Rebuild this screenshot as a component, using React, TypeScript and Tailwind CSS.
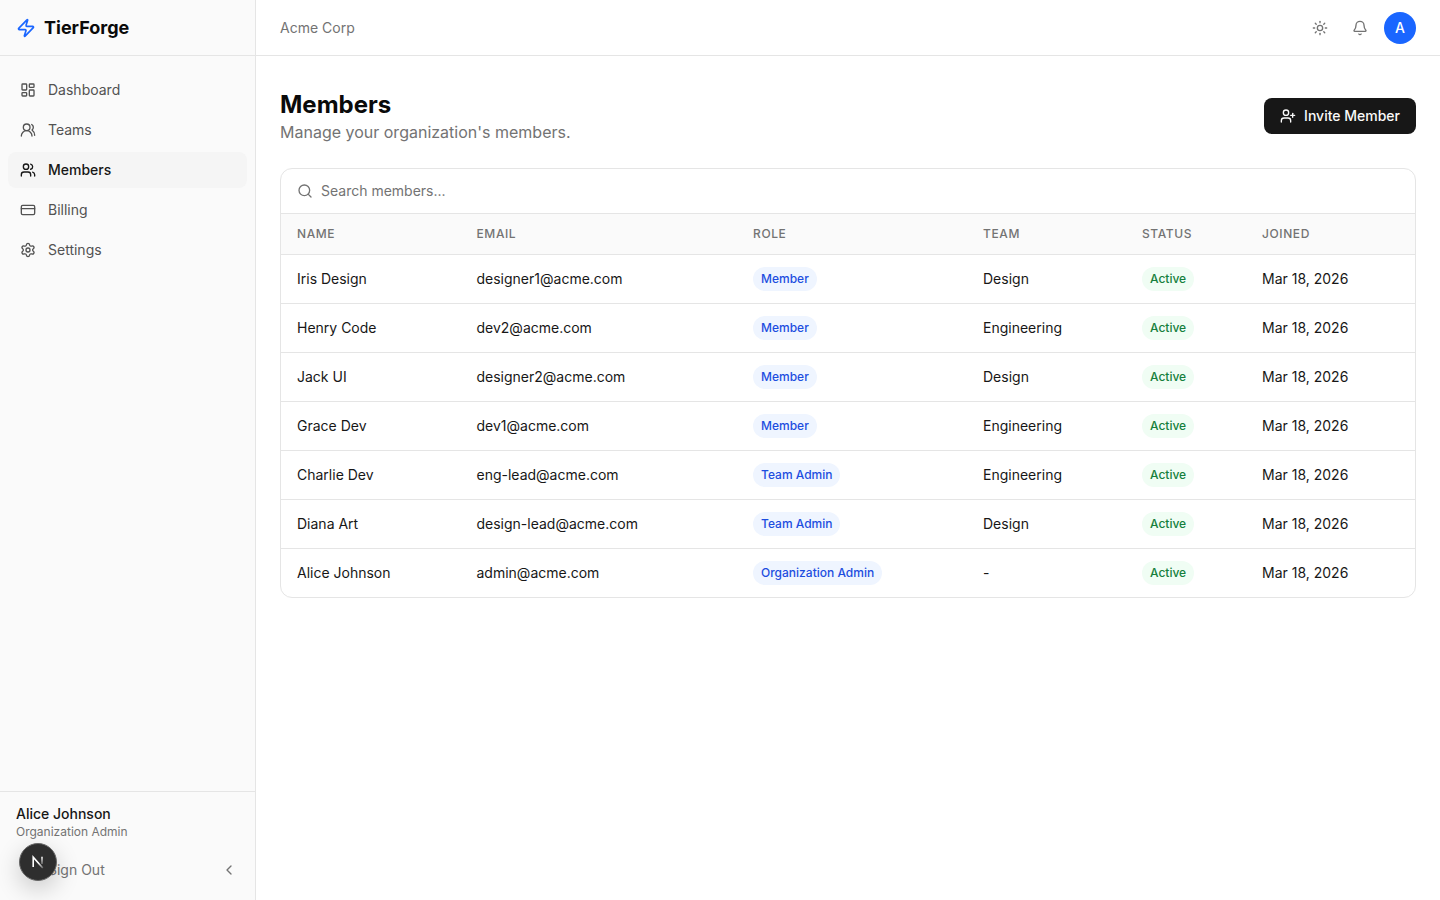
import {
  Bell,
  ChevronLeft,
  CreditCard,
  LayoutDashboard,
  Search,
  Settings,
  Sun,
  UserPlus,
  Users,
  UsersRound,
  Zap,
} from 'lucide-react';

const nav = [
  { label: 'Dashboard', icon: LayoutDashboard },
  { label: 'Teams', icon: UsersRound },
  { label: 'Members', icon: Users, active: true },
  { label: 'Billing', icon: CreditCard },
  { label: 'Settings', icon: Settings },
];

const members = [
  { name: 'Iris Design', email: 'designer1@acme.com', role: 'Member', team: 'Design' },
  { name: 'Henry Code', email: 'dev2@acme.com', role: 'Member', team: 'Engineering' },
  { name: 'Jack UI', email: 'designer2@acme.com', role: 'Member', team: 'Design' },
  { name: 'Grace Dev', email: 'dev1@acme.com', role: 'Member', team: 'Engineering' },
  { name: 'Charlie Dev', email: 'eng-lead@acme.com', role: 'Team Admin', team: 'Engineering' },
  { name: 'Diana Art', email: 'design-lead@acme.com', role: 'Team Admin', team: 'Design' },
  { name: 'Alice Johnson', email: 'admin@acme.com', role: 'Organization Admin', team: '-' },
];

const columns = [
  { label: 'Name', width: 'w-[179.5px]' },
  { label: 'Email', width: 'w-[276.5px]' },
  { label: 'Role', width: 'w-[230px]' },
  { label: 'Team', width: 'w-[159px]' },
  { label: 'Status', width: 'w-[120px]' },
  { label: 'Joined', width: 'w-auto' },
];

function Sidebar() {
  return (
    <aside className="relative flex h-full w-[256px] shrink-0 flex-col border-r border-[#e5e5e5] bg-[#fafafa]">
      <div className="flex h-[56px] items-center gap-2 border-b border-[#e5e5e5] px-4">
        <Zap className="h-5 w-5 text-[#1a66ff]" strokeWidth={2} />
        <span className="text-[18px] font-bold text-[#0a0a0a]">TierForge</span>
      </div>
      <nav className="flex flex-1 flex-col gap-1 px-2 py-4">
        {nav.map(({ label, icon: Icon, active }) => (
          <div
            key={label}
            className={
              active
                ? 'flex h-[36px] items-center gap-3 rounded-lg bg-[#f5f5f5] px-3 text-sm font-medium text-[#171717]'
                : 'flex h-[36px] items-center gap-3 rounded-lg px-3 text-sm text-[#525252]'
            }
          >
            <Icon className="h-4 w-4 shrink-0" strokeWidth={2} />
            <span>{label}</span>
          </div>
        ))}
      </nav>
      <div className="h-[109px] border-t border-[#e5e5e5] px-4 pt-3">
        <div className="text-sm font-medium leading-[20px] text-[#171717]">Alice Johnson</div>
        <div className="text-xs leading-[16px] text-[#737373]">Organization Admin</div>
        <div className="mt-[14px] flex h-[32px] items-center justify-between pl-8 pr-[2px] text-sm text-[#737373]">
          <span>Sign Out</span>
          <ChevronLeft className="h-4 w-4" />
        </div>
      </div>
      <div className="absolute bottom-[19px] left-[19px] flex h-[38px] w-[38px] items-center justify-center rounded-full border border-[#666666] bg-[#2e2e2e] shadow-[0_8px_24px_rgba(0,0,0,0.2)]">
        <svg width="16" height="16" viewBox="0 0 16 16" fill="none">
          <defs>
            <linearGradient id="nextDiag" x1="3" y1="3" x2="13" y2="14" gradientUnits="userSpaceOnUse">
              <stop offset="0.55" stopColor="#ffffff" />
              <stop offset="1" stopColor="#ffffff" stopOpacity="0.25" />
            </linearGradient>
            <linearGradient id="nextStem" x1="12" y1="2.5" x2="12" y2="10" gradientUnits="userSpaceOnUse">
              <stop offset="0" stopColor="#ffffff" />
              <stop offset="1" stopColor="#ffffff" stopOpacity="0.3" />
            </linearGradient>
          </defs>
          <path d="M3.2 13V3.2L12.8 14" stroke="url(#nextDiag)" strokeWidth="1.6" />
          <path d="M12 2.8V10" stroke="url(#nextStem)" strokeWidth="1.6" />
        </svg>
      </div>
    </aside>
  );
}

function MembersTable() {
  return (
    <div className="overflow-hidden rounded-xl border border-[#e5e5e5] bg-white">
      <div className="flex h-[45px] items-center gap-2 border-b border-[#e5e5e5] px-4">
        <Search className="h-4 w-4 text-[#737373]" />
        <span className="text-sm text-[#737373]">Search members...</span>
      </div>
      <table className="w-full table-fixed border-collapse text-left">
        <thead>
          <tr className="h-[40px] border-b border-[#e5e5e5] bg-[#fafafa]">
            {columns.map((col) => (
              <th
                key={col.label}
                className={`${col.width} px-4 text-xs font-medium uppercase tracking-[0.6px] text-[#737373]`}
              >
                {col.label}
              </th>
            ))}
          </tr>
        </thead>
        <tbody>
          {members.map((m) => (
            <tr key={m.email} className="h-[49px] border-b border-[#e5e5e5] text-sm text-[#171717] last:border-b-0">
              <td className="px-4">{m.name}</td>
              <td className="px-4">{m.email}</td>
              <td className="px-4">
                <span className="inline-flex h-[24px] items-center rounded-full bg-[#eff5ff] px-2 text-xs font-medium text-[#1d4ee0]">
                  {m.role}
                </span>
              </td>
              <td className="px-4">{m.team}</td>
              <td className="px-4">
                <span className="inline-flex h-[24px] items-center rounded-full bg-[#f0fdf4] px-2 text-xs font-medium text-[#15803d]">
                  Active
                </span>
              </td>
              <td className="px-4">Mar 18, 2026</td>
            </tr>
          ))}
        </tbody>
      </table>
    </div>
  );
}

export default function App() {
  return (
    <div className="flex h-[900px] w-full overflow-hidden bg-white font-['Inter',sans-serif] text-[#0a0a0a]">
      <Sidebar />
      <div className="flex min-w-0 flex-1 flex-col">
        <header className="flex h-[56px] items-center justify-between border-b border-[#e5e5e5] px-6">
          <span className="text-sm text-[#737373]">Acme Corp</span>
          <div className="flex items-center gap-6">
            <Sun className="h-4 w-4 text-[#737373]" />
            <div className="flex items-center gap-4">
              <Bell className="h-4 w-4 text-[#737373]" />
              <div className="flex h-8 w-8 items-center justify-center rounded-full bg-[#1a66ff] text-sm font-medium text-white">
                A
              </div>
            </div>
          </div>
        </header>
        <main className="flex flex-col gap-6 p-6 pt-8">
          <div className="flex items-center justify-between">
            <div>
              <h1 className="h-[32px] text-2xl font-bold leading-[34px] text-[#0a0a0a]">Members</h1>
              <p className="text-base leading-[24px] text-[#737373]">Manage your organization's members.</p>
            </div>
            <button className="flex h-[36px] items-center gap-2 rounded-lg bg-[#171717] px-4 text-sm font-medium text-[#fafafa]">
              <UserPlus className="h-4 w-4" />
              Invite Member
            </button>
          </div>
          <MembersTable />
        </main>
      </div>
    </div>
  );
}
